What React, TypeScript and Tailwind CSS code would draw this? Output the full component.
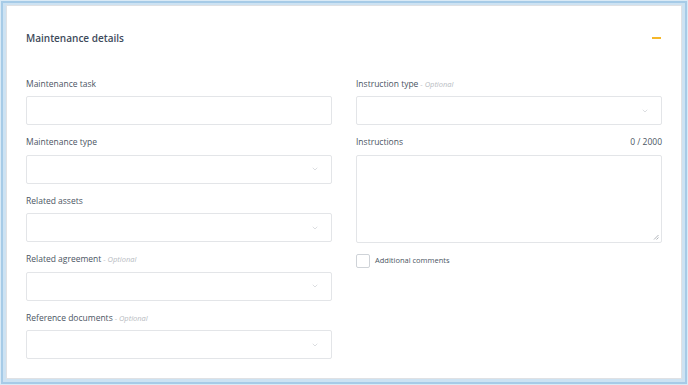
import { ChevronDown } from "lucide-react";

function Label({ text, optional, right }: { text: string; optional?: boolean; right?: string }) {
  return (
    <div className="flex items-center justify-between h-[12px] mb-[6px] text-[8.5px] text-[#4b5563]">
      <span>
        {text}
        {optional && <span className="italic text-[7.5px] text-[#b8bcc2]"> - Optional</span>}
      </span>
      {right && <span>{right}</span>}
    </div>
  );
}

function Select({ chevron = true }: { chevron?: boolean }) {
  return (
    <div className="h-[29px] border border-[#e3e5e8] rounded-[2px] flex items-center justify-end pr-[12px]">
      {chevron && <ChevronDown size={8} strokeWidth={1.5} className="text-[#b9bdc3]" />}
    </div>
  );
}

function Field({ text, optional, chevron }: { text: string; optional?: boolean; chevron?: boolean }) {
  return (
    <div className="flex flex-col mb-[11.5px]">
      <Label text={text} optional={optional} />
      <Select chevron={chevron} />
    </div>
  );
}

export default function App() {
  return (
    <div
      className="w-[688px] h-[385px] bg-[#d9eaf6] p-[1px]"
      style={{ fontFamily: '"Open Sans", "Noto Sans", sans-serif' }}
    >
      <div className="w-full h-full border-[2px] border-[#a6cbe7] pl-[3px] pt-[2px] pr-[3px] pb-[3px] bg-[#cde2f2]">
        <div className="w-full h-full bg-white border border-[#dfe1e4] pl-[19px] pr-[19px] pt-[25px]">
          <div className="flex items-center justify-between h-[14px]">
            <span className="text-[10px] font-semibold text-[#3e4a5b]">Maintenance details</span>
            <span className="w-[9px] h-[2px] bg-[#f5b72a] mr-[1px]" />
          </div>
          <div className="grid grid-cols-2 gap-x-[24px] mt-[33px]">
            <div className="flex flex-col">
              <Field text="Maintenance task" chevron={false} />
              <Field text="Maintenance type" />
              <Field text="Related assets" />
              <Field text="Related agreement" optional />
              <Field text="Reference documents" optional />
            </div>
            <div className="flex flex-col">
              <Field text="Instruction type" optional />
              <div className="flex flex-col">
                <Label text="Instructions" right="0 / 2000" />
                <div className="relative h-[88px] border border-[#e3e5e8] rounded-[2px]">
                  <svg className="absolute right-[2px] bottom-[2px]" width="6" height="6" viewBox="0 0 6 6">
                    <path d="M5.5 1 L1 5.5 M5.5 3.5 L3.5 5.5" stroke="#9aa0a6" strokeWidth="0.8" />
                  </svg>
                </div>
              </div>
              <label className="flex items-center gap-[5px] mt-[11px]">
                <span className="w-[14px] h-[14px] border border-[#cfd3d8] rounded-[2px] bg-white" />
                <span className="text-[7.5px] text-[#4b5563]">Additional comments</span>
              </label>
            </div>
          </div>
        </div>
      </div>
    </div>
  );
}
